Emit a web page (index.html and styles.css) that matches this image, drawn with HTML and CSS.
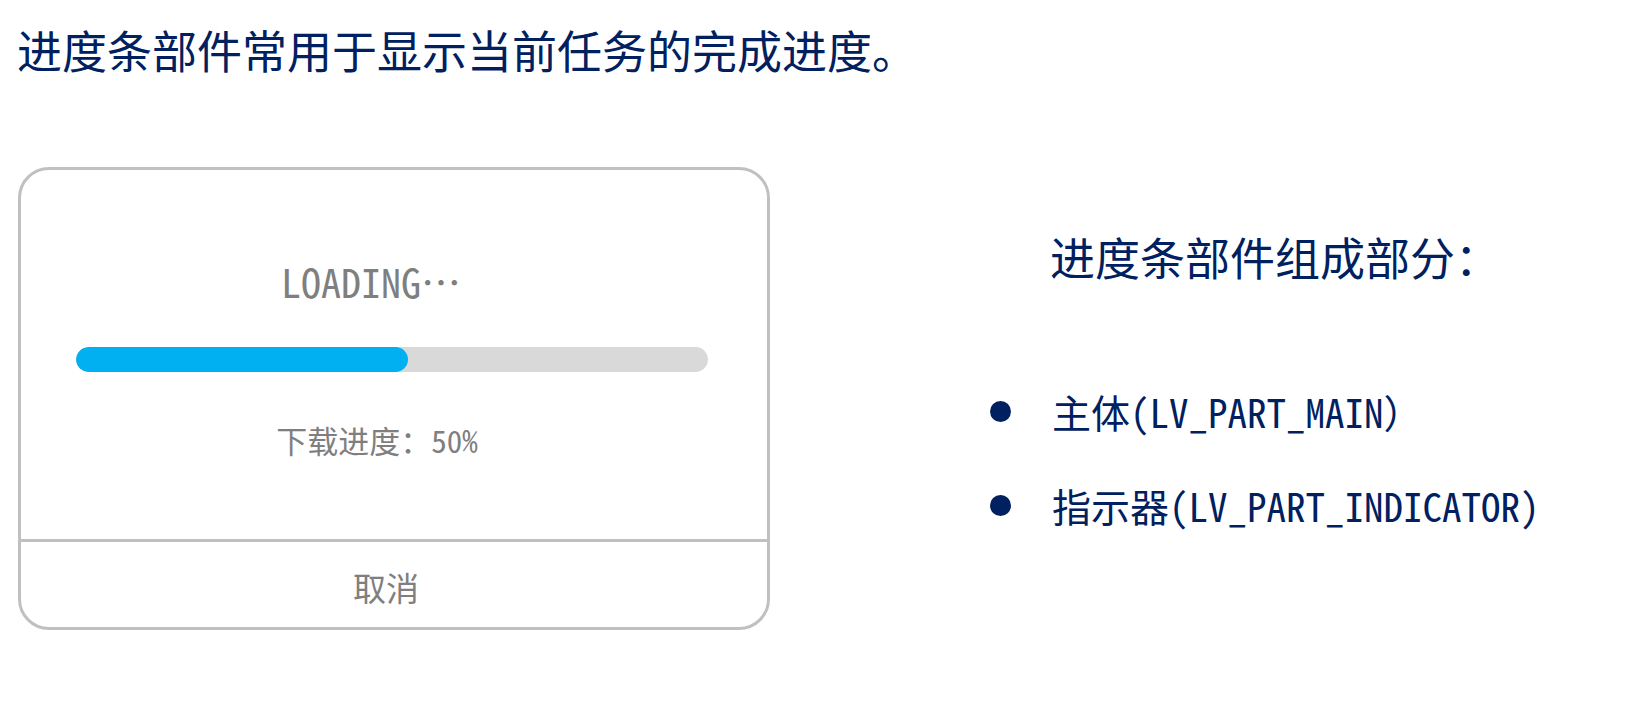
FILE: index.html
```html
<!DOCTYPE html>
<html lang="zh-CN">
<head>
<meta charset="utf-8">
<title>进度条部件</title>
<link rel="stylesheet" href="styles.css">
</head>
<body>
<h1 class="title">进度条部件常用于显示当前任务的完成进度。</h1>
<div class="row">
  <div class="card">
    <div class="card-body">
      <div class="loading">LOADING…</div>
      <div class="bar"><div class="indicator" style="width:52.6%"></div></div>
      <div class="progress-text">下载进度：50%</div>
    </div>
    <div class="card-foot">取消</div>
  </div>
  <div class="panel">
    <h2 class="panel-title">进度条部件组成部分：</h2>
    <ul class="parts">
      <li class="part">主体(LV_PART_MAIN）</li>
      <li class="part">指示器(LV_PART_INDICATOR)</li>
    </ul>
  </div>
</div>
</body>
</html>
```

FILE: styles.css
```css
html, body {
  margin: 0;
  padding: 0;
  background: #ffffff;
}
body {
  font-family: "Noto Sans Mono CJK SC", "Noto Sans CJK SC", sans-serif;
  color: #002060;
  width: 1632px;
  height: 721px;
  overflow: hidden;
}
.title {
  margin: 24px 0 0 17px;
  font-size: 45px;
  line-height: 52px;
  font-weight: 400;
  color: #002060;
}
.row {
  display: flex;
  align-items: flex-start;
  margin-top: 91px;
}
.card {
  margin-left: 18px;
  width: 752px;
  height: 463px;
  box-sizing: border-box;
  border: 3px solid #c0c0c0;
  border-radius: 31px;
  display: flex;
  flex-direction: column;
  color: #7f7f7f;
}
.card-body {
  height: 372px;
  box-sizing: border-box;
  border-bottom: 3px solid #c0c0c0;
  padding: 91px 59px 0 55px;
  display: flex;
  flex-direction: column;
}
.loading {
  font-size: 40px;
  line-height: 40px;
  text-align: center;
  padding-right: 42px;
}
.bar {
  margin-top: 46px;
  height: 25px;
  border-radius: 12.5px;
  background: #d9d9d9;
  overflow: hidden;
}
.indicator {
  height: 100%;
  background: #00b0f0;
  border-radius: 12.5px;
}
.progress-text {
  margin-top: 50px;
  font-size: 31px;
  line-height: 36px;
  text-align: center;
  padding-right: 30px;
}
.card-foot {
  flex: 1;
  display: flex;
  align-items: center;
  justify-content: center;
  font-size: 33px;
  padding-top: 5px;
  padding-right: 16px;
}
.panel {
  margin-left: 220px;
  padding-top: 65px;
}
.panel-title {
  margin: 0 0 0 60px;
  font-size: 45px;
  line-height: 50px;
  font-weight: 400;
}
.parts {
  list-style: none;
  margin: 109px 0 0 0;
  padding: 0;
  display: flex;
  flex-direction: column;
  gap: 54px;
}
.part {
  display: flex;
  align-items: center;
  font-size: 39px;
  line-height: 40px;
}
.part::before {
  content: "";
  width: 21px;
  height: 21px;
  border-radius: 50%;
  background: #002060;
  margin-right: 41px;
  flex: none;
}
```
